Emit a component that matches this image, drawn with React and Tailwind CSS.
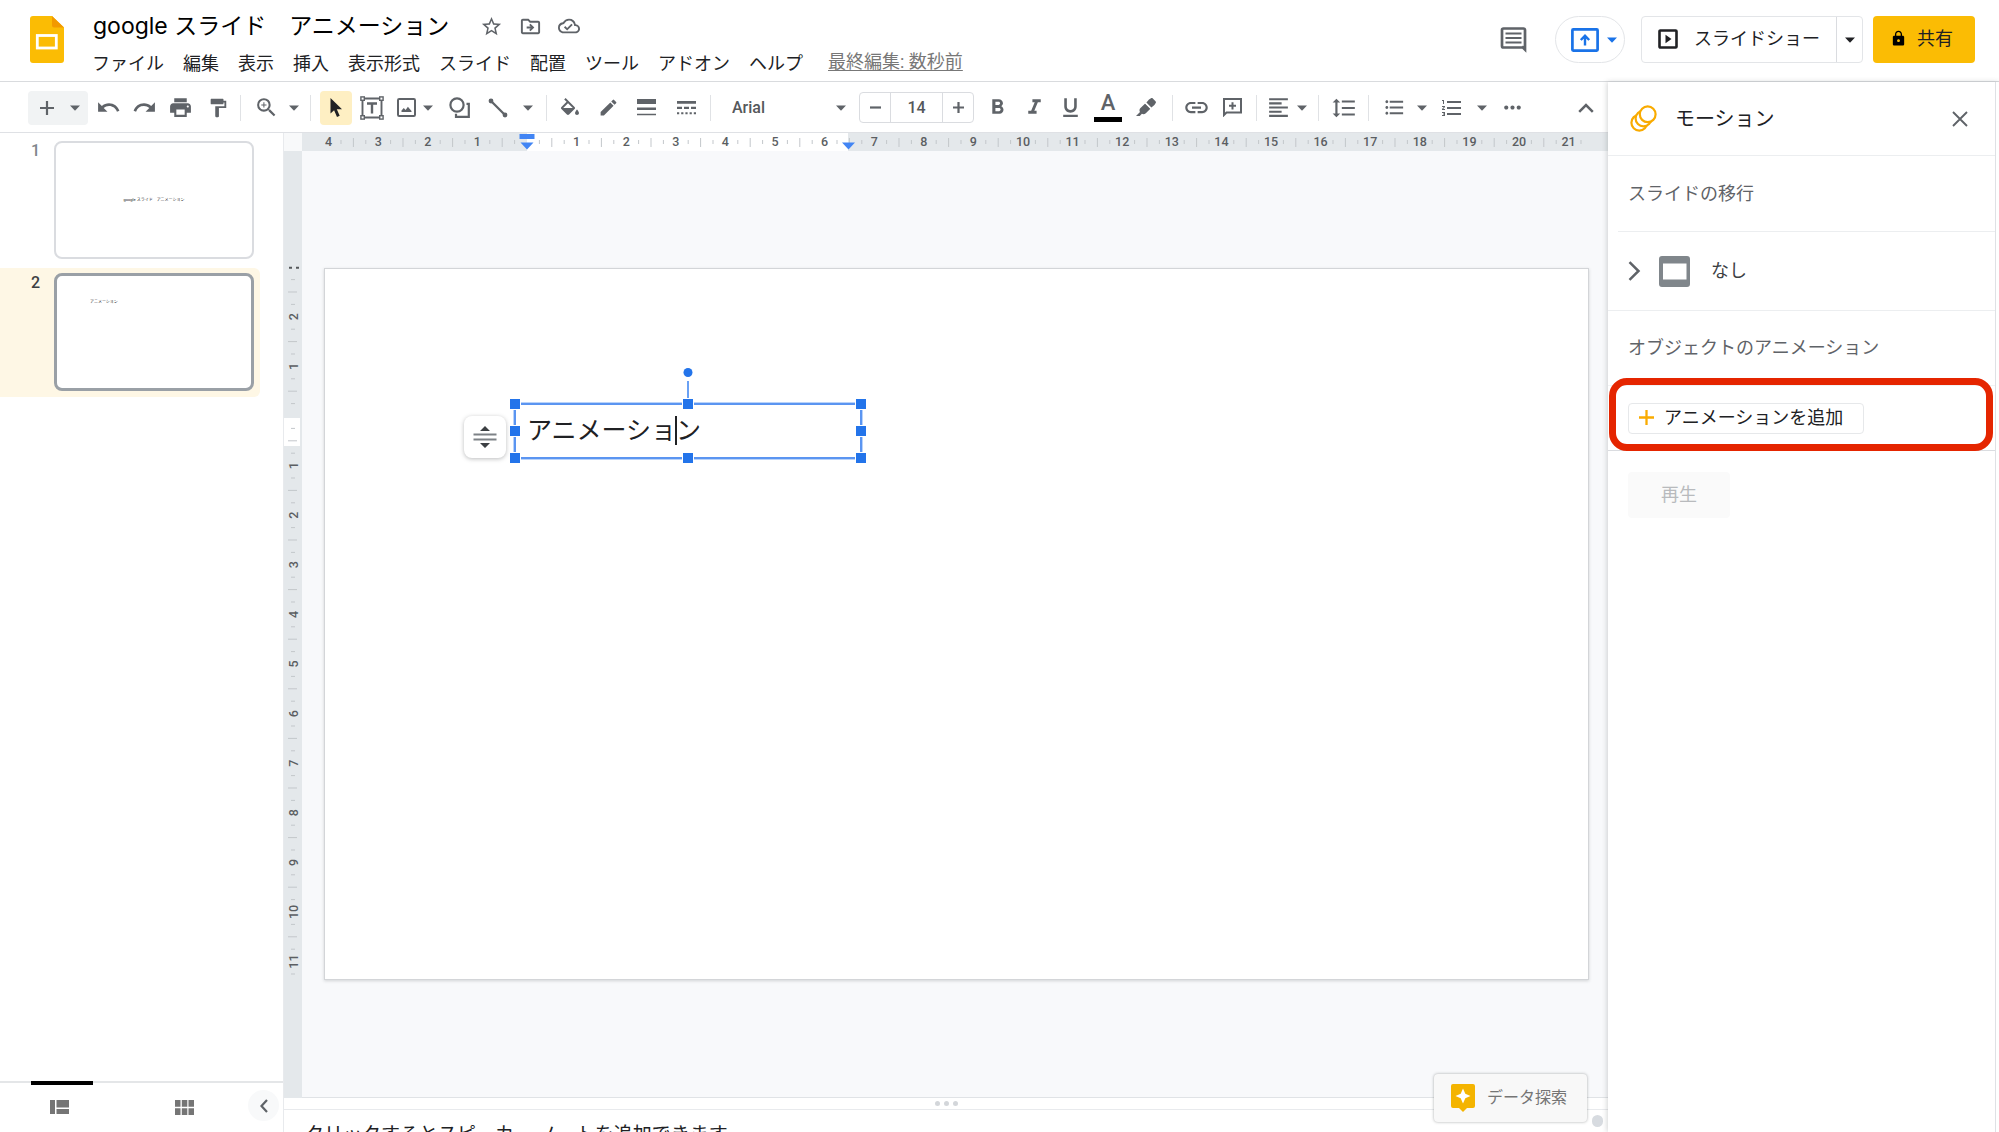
import React from 'react';
import {
  MdUndo,
  MdRedo,
  MdPrint,
  MdFormatPaint,
  MdZoomIn,
  MdEdit,
  MdFormatBold,
  MdFormatItalic,
  MdFormatUnderlined,
  MdLink,
  MdFormatAlignLeft,
  MdFormatLineSpacing,
  MdFormatListBulleted,
  MdFormatListNumbered,
  MdMoreHoriz,
  MdLock,
  MdStarBorder,
  MdOutlineDriveFileMove,
  MdOutlineCloudDone,
} from 'react-icons/md';

const MENUS = ['ファイル', '編集', '表示', '挿入', '表示形式', 'スライド', '配置', 'ツール', 'アドオン', 'ヘルプ'];

const UNIT = 49.6;

function Caret({ className = '' }) {
  return (
    <svg width="10" height="6" viewBox="0 0 10 6" className={`shrink-0 ${className}`} aria-hidden="true">
      <path d="M0 0.5h10L5 5.8z" fill="currentColor" />
    </svg>
  );
}

function Tool({ label, w, className = '', children }) {
  return (
    <button aria-label={label} className={`flex h-[34px] shrink-0 items-center justify-center ${w} ${className}`}>
      {children}
    </button>
  );
}

function Sep({ w }) {
  return (
    <div className={`flex shrink-0 justify-center ${w}`}>
      <div className="h-[26px] w-px bg-[#e0e2e5]" />
    </div>
  );
}

function Logo() {
  return (
    <svg width="34" height="47" viewBox="0 0 34 47" aria-hidden="true">
      <path d="M3 0h19l12 11.500v32.500a3 3 0 0 1-3 3H3a3 3 0 0 1-3-3V3a3 3 0 0 1 3-3z" fill="#fbbc04" />
      <path d="M22 0l12 11.500H24a2 2 0 0 1-2-2z" fill="#f29900" />
      <rect x="7.300" y="19.500" width="19" height="12.500" fill="none" stroke="#fff" strokeWidth="2.800" />
    </svg>
  );
}

function Header() {
  return (
    <header className="flex h-[82px] shrink-0 items-start border-b border-[#d9dbde] bg-white pr-6 pl-[30px]">
      <div className="mt-4 shrink-0">
        <Logo />
      </div>
      <div className="ml-7 min-w-0 flex-1">
        <div className="flex h-[50px] items-center pt-0.5">
          <input
            aria-label="ドキュメントの名前"
            defaultValue="google スライド　アニメーション"
            className="h-9 w-[388px] bg-transparent pl-px font-[Inter,'Noto_Sans_CJK_JP',sans-serif] text-[23px] leading-9 text-black outline-none"
          />
          <div className="flex items-center gap-4 text-[#5f6368]">
            <button aria-label="スター">
              <MdStarBorder size={23} />
            </button>
            <button aria-label="移動">
              <MdOutlineDriveFileMove size={23} />
            </button>
            <button aria-label="保存済み">
              <MdOutlineCloudDone size={22} />
            </button>
          </div>
        </div>
        <nav className="flex h-7 items-center gap-[19px] text-[18px] leading-7 whitespace-nowrap text-[#202124]">
          {MENUS.map((m) => (
            <button key={m}>{m}</button>
          ))}
          <a href="#history" className="ml-1.5 self-start leading-6 text-[#777] underline underline-offset-2">
            最終編集: 数秒前
          </a>
        </nav>
      </div>
      <div className="mt-4 flex h-[47px] shrink-0 items-center text-[18px]">
        <button aria-label="コメント履歴を開く" className="mr-7">
          <svg width="27" height="27" viewBox="0 0 27 27" fill="none" stroke="#5f6368" aria-hidden="true">
            <path d="M24.500 21.500H3.500a1.500 1.500 0 0 1-1.500-1.500V4a1.500 1.500 0 0 1 1.500-1.500h20a1.500 1.500 0 0 1 1.500 1.500v19.500l-3-3" strokeWidth="2.700" />
            <path d="M5.500 7.500h16M5.500 12h16M5.500 16.500h16" strokeWidth="2.200" />
          </svg>
        </button>
        <button aria-label="会議に表示" className="mr-4 flex h-[47px] w-[70px] items-center gap-2 rounded-full border border-[#e3e5e8] pl-[15px] text-[#1a73e8]">
          <svg width="28" height="24" viewBox="0 0 28 24" fill="none" stroke="currentColor" strokeWidth="2.700" aria-hidden="true">
            <rect x="1.400" y="1.400" width="25.200" height="21.200" rx="0.800" />
            <path d="M14 17.500V8M9.800 12l4.200-4.200 4.200 4.200" strokeWidth="2.400" />
          </svg>
          <Caret />
        </button>
        <div className="mr-2.5 flex h-[47px] rounded border border-[#e3e5e8] text-[#202124]">
          <button className="flex w-[194px] items-center pb-0.5 pl-4">
            <svg width="20" height="20" viewBox="0 0 20 20" fill="none" stroke="currentColor" strokeWidth="2.600" aria-hidden="true">
              <rect x="1.500" y="1.500" width="17" height="17" rx="0.800" />
              <path d="M7.500 5.800v8.400l6-4.200z" fill="currentColor" stroke="none" />
            </svg>
            <span className="ml-4">スライドショー</span>
          </button>
          <button aria-label="プレゼンテーションのオプション" className="flex w-[26px] items-center justify-center border-l border-[#dadce0]">
            <Caret />
          </button>
        </div>
        <button className="flex h-[47px] w-[102px] items-center rounded bg-[#fbbc04] pb-0.5 pl-[17px] text-[#202124]">
          <MdLock size={17} className="text-black" />
          <span className="ml-2.5">共有</span>
        </button>
      </div>
    </header>
  );
}

function Toolbar() {
  return (
    <div className="flex h-[51px] shrink-0 items-center border-b border-[#dfe1e5] bg-white pt-px pl-7 text-[#5f6368]">
      <button aria-label="新しいスライド" className="flex h-[34px] w-15 shrink-0 items-center rounded-sm bg-[#f1f3f4] pl-3">
        <svg width="14" height="14" viewBox="0 0 14 14" stroke="currentColor" strokeWidth="2.200" aria-hidden="true">
          <path d="M7 0v14M0 7h14" />
        </svg>
        <Caret className="ml-4" />
      </button>
      <Tool label="元に戻す" w="w-10"><MdUndo size={25} /></Tool>
      <Tool label="やり直す" w="w-8"><MdRedo size={25} /></Tool>
      <Tool label="印刷" w="w-10"><MdPrint size={25} /></Tool>
      <Tool label="書式の貼り付け" w="w-9"><MdFormatPaint size={22} /></Tool>
      <Sep w="w-2" />
      <Tool label="ズーム" w="w-11"><MdZoomIn size={25} /></Tool>
      <Tool label="ズームのオプション" w="w-3"><Caret /></Tool>
      <Sep w="w-5" />
      <Tool label="選択" w="w-8" className="rounded-sm bg-[#feefc3]">
        <svg width="14" height="20" viewBox="0 0 14 20" fill="#202124" aria-hidden="true">
          <path d="M1.500 0v15.500l3.600-3.200 2.900 6.700 2.700-1.200-2.900-6.500h5.200z" />
        </svg>
      </Tool>
      <Tool label="テキスト ボックス" w="w-10">
        <svg width="24" height="24" viewBox="0 0 24 24" fill="none" stroke="currentColor" className="shrink-0" aria-hidden="true">
          <path d="M4 2.500h16M4 21.500h16M2.500 4v16M21.500 4v16" strokeWidth="1.900" />
          <path d="M7 7.500h10M12 7.500v10" strokeWidth="2.400" />
          <g fill="#fff" strokeWidth="1.400">
            <rect x="0.900" y="0.900" width="3.400" height="3.400" />
            <rect x="19.700" y="0.900" width="3.400" height="3.400" />
            <rect x="0.900" y="19.700" width="3.400" height="3.400" />
            <rect x="19.700" y="19.700" width="3.400" height="3.400" />
          </g>
        </svg>
      </Tool>
      <Tool label="画像を挿入" w="w-7">
        <svg width="19" height="19" viewBox="0 0 19 19" aria-hidden="true">
          <rect x="1" y="1" width="17" height="17" rx="1.200" fill="none" stroke="currentColor" strokeWidth="2" />
          <path d="M4.500 14v-1.500l2.300-2.500 1.800 2 2.300-3.200 3.600 4.200V14z" fill="currentColor" />
        </svg>
      </Tool>
      <Tool label="画像のオプション" w="w-4"><Caret /></Tool>
      <Tool label="図形" w="w-12">
        <svg width="22" height="22" viewBox="0 0 22 22" fill="none" stroke="currentColor" strokeWidth="2.200" aria-hidden="true">
          <circle cx="8" cy="8" r="6.600" />
          <path d="M17.500 6.800h2.300v13H7v-3" />
        </svg>
      </Tool>
      <Tool label="線" w="w-7">
        <svg width="20" height="20" viewBox="0 0 20 20" stroke="currentColor" aria-hidden="true">
          <path d="M3 3l14 14" strokeWidth="2.300" />
          <circle cx="3" cy="3" r="2.400" fill="currentColor" stroke="none" />
          <circle cx="17" cy="17" r="2.400" fill="currentColor" stroke="none" />
        </svg>
      </Tool>
      <Tool label="線のオプション" w="w-8"><Caret /></Tool>
      <Sep w="w-1" />
      <Tool label="塗りつぶしの色" w="w-11">
        <svg width="22" height="22" viewBox="1 -1 22 22" fill="currentColor" aria-hidden="true">
          <path d="M16.560 8.940L7.620 0 6.210 1.410l2.380 2.380-5.150 5.150c-.59.59-.59 1.540 0 2.120l5.500 5.500c.29.29.68.44 1.060.44s.77-.15 1.060-.44l5.500-5.500c.59-.58.59-1.530 0-2.120zM5.210 10L10 5.210 14.790 10H5.210zM19 11.500s-2 2.170-2 3.500c0 1.100.9 2 2 2s2-.9 2-2c0-1.330-2-3.500-2-3.500z" />
        </svg>
      </Tool>
      <Tool label="枠線の色" w="w-8"><MdEdit size={21} /></Tool>
      <Tool label="枠線の太さ" w="w-11">
        <svg width="19" height="17" viewBox="0 0 19 17" fill="currentColor" aria-hidden="true">
          <path d="M0 0h19v5H0zM0 8.500h19v2.500H0zM0 14.800h19v1.500H0z" />
        </svg>
      </Tool>
      <Tool label="枠線の破線" w="w-9">
        <svg width="19" height="14" viewBox="0 0 19 14" fill="currentColor" aria-hidden="true">
          <path d="M0 0h19v2.800H0zM0 5.700h5v2.400H0zM7 5.700h5v2.400H7zM14 5.700h5v2.400h-5zM0 11.200h2.200v2H0zM4.200 11.200h2.200v2H4.200zM8.400 11.200h2.200v2H8.400zM12.600 11.200h2.200v2h-2.200zM16.800 11.200H19v2h-2.200z" />
        </svg>
      </Tool>
      <Sep w="w-3" />
      <label className="flex h-[34px] w-[143px] shrink-0 items-center pr-[13px] pl-4">
        <select aria-label="フォント" className="h-full flex-1 appearance-none bg-transparent text-[16px] font-medium text-[#55585b] outline-none">
          <option>Arial</option>
        </select>
        <Caret />
      </label>
      <div className="flex h-[31px] w-[115px] shrink-0 items-stretch rounded-sm border border-[#dadce0]">
        <button aria-label="フォントサイズを縮小" className="flex w-[30px] items-center justify-center">
          <svg width="11" height="11" viewBox="0 0 11 11" aria-hidden="true"><path d="M0 5.500h11" stroke="currentColor" strokeWidth="2.200" /></svg>
        </button>
        <input aria-label="フォントサイズ" defaultValue="14" className="w-0 min-w-0 flex-1 border-x border-[#dadce0] text-center text-[16px] font-medium text-[#55585b] outline-none" />
        <button aria-label="フォントサイズを拡大" className="flex w-[30px] items-center justify-center">
          <svg width="11" height="11" viewBox="0 0 11 11" aria-hidden="true"><path d="M0 5.500h11M5.500 0v11" stroke="currentColor" strokeWidth="2.200" /></svg>
        </button>
      </div>
      <Tool label="太字" w="w-[46px]"><MdFormatBold size={25} /></Tool>
      <Tool label="斜体" w="w-7"><MdFormatItalic size={25} /></Tool>
      <Tool label="下線" w="w-11"><MdFormatUnderlined size={25} /></Tool>
      <Tool label="テキストの色" w="w-8" className="flex-col">
        <span className="text-[22px] leading-5 font-medium">A</span>
        <span className="mt-1 h-[5px] w-7 bg-black" />
      </Tool>
      <Tool label="ハイライトの色" w="w-11">
        <svg width="20" height="20" viewBox="0 0 20 20" fill="currentColor" aria-hidden="true">
          <path d="M13 1.600l2-1.300c.6-.4 1.300-.3 1.800.2l2.700 2.700c.5.500.6 1.200.2 1.800l-1.300 2-3 2.500-5-5zM9.200 5.600l5.200 5.200-4.600 4.400c-1.300 1.100-2.600 1.200-3.900.6L3.800 18H0l4-4c-.8-1.400-.7-2.800.5-4z" />
          <path d="M8.800 4.900l6.300 6.300" stroke="#fff" strokeWidth="1" />
        </svg>
      </Tool>
      <Sep w="w-2" />
      <Tool label="リンクを挿入" w="w-10"><MdLink size={27} /></Tool>
      <Tool label="コメントを追加" w="w-8">
        <svg width="19" height="19" viewBox="0 0 19 19" fill="none" stroke="currentColor" strokeWidth="2" aria-hidden="true">
          <path d="M1 17V1h17v13.500H3.500z" />
          <path d="M9.500 4.200v7.200M6 7.800h7" />
        </svg>
      </Tool>
      <Sep w="w-4" />
      <Tool label="配置" w="w-7"><MdFormatAlignLeft size={25} /></Tool>
      <Tool label="配置のオプション" w="w-5"><Caret /></Tool>
      <Sep w="w-3" />
      <Tool label="行間隔と段落の間隔" w="w-10"><MdFormatLineSpacing size={26} /></Tool>
      <Sep w="w-2" />
      <Tool label="箇条書き" w="w-11"><MdFormatListBulleted size={23} /></Tool>
      <Tool label="箇条書きのオプション" w="w-3"><Caret /></Tool>
      <Tool label="番号付きリスト" w="w-12"><MdFormatListNumbered size={24} /></Tool>
      <Tool label="番号付きリストのオプション" w="w-3"><Caret /></Tool>
      <Tool label="もっと見る" w="w-12"><MdMoreHoriz size={25} /></Tool>
      <Tool label="メニューを非表示" w="w-11" className="ml-auto">
        <svg width="16" height="10" viewBox="0 0 16 10" fill="none" stroke="currentColor" strokeWidth="2.500" aria-hidden="true">
          <path d="M1.200 8.800L8 2l6.800 6.800" />
        </svg>
      </Tool>
    </div>
  );
}

function Thumb({ n, selected, children }) {
  return (
    <li className={`mr-[23px] flex h-[129px] rounded-r-md ${selected ? 'bg-[#fef7e5]' : ''}`}>
      <span className={`w-[54px] pt-[5px] pr-3.5 text-right text-[16px] leading-5 font-medium ${selected ? 'text-[#3c4043]' : 'text-[#80868b]'}`}>
        {n}
      </span>
      <button
        aria-label={`スライド ${n}`}
        className={`mt-[5px] flex h-[118px] w-[200px] flex-col rounded-lg bg-white text-[#202124] ${selected ? 'border-[3px] border-[#9aa0a6]' : 'border-2 border-[#dadce0]'}`}
      >
        {children}
      </button>
    </li>
  );
}

function Filmstrip() {
  return (
    <aside className="flex w-[283px] shrink-0 flex-col bg-white">
      <ol className="flex flex-1 flex-col gap-[3px] pt-[3px]">
        <Thumb n={1}>
          <span className="m-auto text-[4px] leading-none whitespace-pre">google スライド　アニメーション</span>
        </Thumb>
        <Thumb n={2} selected>
          <span className="mt-6 ml-[33px] self-start text-[4px] leading-none">アニメーション</span>
        </Thumb>
      </ol>
      <div className="flex h-[51px] items-start border-t-2 border-[#e4e6e8] text-[#757575]">
        <button aria-label="フィルムストリップ表示" className="-mt-0.5 ml-[31px] flex h-[48px] w-[62px] items-center justify-center border-t-4 border-black pr-1.5">
          <svg width="19" height="14" viewBox="0 0 19 14" fill="currentColor" aria-hidden="true">
            <path d="M0 0h5v14H0zM6.500 0H19v7.500H6.500zM6.500 9H19v5H6.500z" />
          </svg>
        </button>
        <button aria-label="グリッド表示" className="ml-[60px] flex h-[48px] w-[62px] items-center justify-center">
          <svg width="19" height="15" viewBox="0 0 19 15" fill="currentColor" aria-hidden="true">
            <path d="M0 0h5.500v6.800H0zM6.800 0h5.500v6.800H6.800zM13.500 0H19v6.800h-5.500zM0 8.200h5.500V15H0zM6.800 8.200h5.500V15H6.800zM13.500 8.200H19V15h-5.500z" />
          </svg>
        </button>
        <button aria-label="フィルムストリップを閉じる" className="mt-[7px] mr-1 ml-auto flex h-[31px] w-[31px] items-center justify-center rounded-full bg-[#f8f9fa] text-[#5f6368]">
          <svg width="8" height="14" viewBox="0 0 8 14" fill="none" stroke="currentColor" strokeWidth="2.200" aria-hidden="true">
            <path d="M7 1L1.500 7 7 13" />
          </svg>
        </button>
      </div>
    </aside>
  );
}

const H_NUMS = Array.from({ length: 26 }, (_, i) => i - 4);
const V_NUMS = Array.from({ length: 14 }, (_, i) => i - 2);

function HRuler() {
  const zero = 225;
  return (
    <svg height="19" className="block w-full min-w-0 bg-[#e4e8eb]" aria-hidden="true">
      <rect x={zero} y="0" width="321" height="19" fill="#fff" />
      {H_NUMS.map((n) => {
        const x = zero + n * UNIT;
        return (
          <g key={n}>
            {n !== 0 && (
              <text x={x} y="13" textAnchor="middle" fontSize="12.500" fontWeight="500" fill="#5b5e62">
                {Math.abs(n)}
              </text>
            )}
            <path d={`M${x + UNIT / 4} 7v4${n < 21 ? `M${x + UNIT / 2} 5v9M${x + (3 * UNIT) / 4} 7v4` : ''}`} stroke="#c3c7cb" />
          </g>
        );
      })}
      <path d={`M${zero - 7.500} 1h15v5h-15zM${zero - 6.500} 9.500h13l-6.500 7zM${zero + 315} 9.500h13l-6.500 7z`} fill="#4285f4" />
    </svg>
  );
}

function VRuler() {
  const zero = 265;
  return (
    <svg width="19" className="block h-full border-l border-[#e8eaed] bg-[#e4e8eb]" aria-hidden="true">
      <rect x="0" y={zero + 2} width="16" height="28" fill="#fff" />
      <path d={`M5 ${zero - 3 * UNIT + 0.500}h3M12 ${zero - 3 * UNIT + 0.500}h3`} stroke="#55585b" strokeWidth="2" />
      <path d={`M7 ${zero - 2.750 * UNIT}h4M4 ${zero - 2.500 * UNIT}h9M7 ${zero - 2.250 * UNIT}h4`} stroke="#c3c7cb" />
      {V_NUMS.map((n) => {
        const y = zero + n * UNIT;
        return (
          <g key={n}>
            {n !== 0 && (
              <text x="0" y="0" transform={`translate(14 ${y}) rotate(-90)`} textAnchor="middle" fontSize="12.500" fontWeight="500" fill="#5b5e62">
                {Math.abs(n)}
              </text>
            )}
            <path d={`M7 ${y + UNIT / 4}h4${n < 11 ? `M4 ${y + UNIT / 2}h9M7 ${y + (3 * UNIT) / 4}h4` : ''}`} stroke="#c3c7cb" />
          </g>
        );
      })}
    </svg>
  );
}

function Handle({ className }) {
  return <span className={`absolute h-[10px] w-[10px] -translate-x-1/2 -translate-y-1/2 bg-[#2374ea] ring-1 ring-white ${className}`} />;
}

function TextBox() {
  return (
    <div className="absolute top-[134px] left-[189px] h-[56px] w-[348px] border-2 border-[#5b95f1] bg-white ring-1 ring-[#b9d3fa]">
      <p className="pl-[11px] text-[25px] leading-[51px] whitespace-nowrap text-[#202124]">アニメーション</p>
      <span className="absolute top-[11px] left-[159px] h-[29px] w-0.5 bg-[#202124]" />
      <span className="absolute -top-[24px] left-1/2 h-[22px] w-0.5 -translate-x-1/2 bg-[#6aa1f4]" />
      <span className="absolute -top-[37px] left-1/2 h-[9px] w-[9px] -translate-x-1/2 rounded-full bg-[#2374ea]" />
      <Handle className="-top-px -left-px" />
      <Handle className="-top-px left-1/2" />
      <Handle className="-top-px left-[345px]" />
      <Handle className="top-1/2 -left-px" />
      <Handle className="top-1/2 left-[345px]" />
      <Handle className="top-[53px] -left-px" />
      <Handle className="top-[53px] left-1/2" />
      <Handle className="top-[53px] left-[345px]" />
      <button aria-label="自動調整のオプション" className="absolute top-[11px] -left-[52px] flex h-[42px] w-[42px] items-center justify-center rounded-lg bg-white shadow-[0_1px_4px_rgba(60,64,67,0.35)]">
        <svg width="24" height="24" viewBox="0 0 24 24" aria-hidden="true">
          <path d="M7 6l5-5 5 5zM7 18h10l-5 5z" fill="#3c4043" />
          <path d="M0.500 9.500h23M0.500 14.500h23" stroke="#7d8186" strokeWidth="2.200" />
        </svg>
      </button>
    </div>
  );
}

function Workspace() {
  return (
    <main className="relative flex min-w-0 flex-1 flex-col">
      <div className="grid min-h-0 flex-1 grid-cols-[19px_minmax(0,1fr)] grid-rows-[18px_minmax(0,1fr)]">
        <div className="border-l border-[#e8eaed] bg-[#f8f9fa]" />
        <HRuler />
        <VRuler />
        <div className="flex items-center border-b border-[#e0e3e6] bg-[#f8f9fb] pr-[19px] pl-[22px]">
          <section aria-label="スライド" className="relative aspect-video w-full border border-[#d3d5d8] bg-white shadow-[0_1px_3px_rgba(60,64,67,0.2)]">
            <TextBox />
          </section>
        </div>
      </div>
      <div className="flex h-3 shrink-0 items-center justify-center gap-1 border-b border-[#e8eaed] border-l bg-white">
        <span className="h-[5px] w-[5px] rounded-full bg-[#d3d6da]" />
        <span className="h-[5px] w-[5px] rounded-full bg-[#d3d6da]" />
        <span className="h-[5px] w-[5px] rounded-full bg-[#d3d6da]" />
      </div>
      <textarea
        aria-label="スピーカー ノート"
        defaultValue="クリックするとスピーカー ノートを追加できます"
        className="h-[22px] shrink-0 resize-none overflow-hidden border-l border-[#e8eaed] bg-white pt-[11px] pl-[21px] text-[19px] leading-7 text-[#202124] outline-none"
      />
      <button className="absolute right-[21px] bottom-[10px] flex h-[48px] w-[153px] items-center rounded-sm bg-[#f8f8f8] pl-[17px] text-[16px] text-[#757575] shadow-[0_0_3px_rgba(60,64,67,0.45)]">
        <svg width="24" height="28" viewBox="0 0 24 28" className="shrink-0" aria-hidden="true">
          <path d="M2 0h20a2 2 0 0 1 2 2v20a2 2 0 0 1-2 2h-6l-4 4-4-4H2a2 2 0 0 1-2-2V2a2 2 0 0 1 2-2z" fill="#f4b400" />
          <path d="M12 4.500l2.300 5.200L19.500 12l-5.200 2.300L12 19.500l-2.300-5.200L4.500 12l5.200-2.300z" fill="#fff" />
        </svg>
        <span className="ml-3">データ探索</span>
      </button>
      <span className="absolute right-[5px] bottom-[5px] h-3 w-[11px] rounded-full bg-[#d7dbe0]" />
    </main>
  );
}

function MotionPanel() {
  return (
    <aside className="relative flex w-[391px] shrink-0 bg-white pr-[3px] text-[18px] text-[#3c4043] shadow-[-1px_0_5px_rgba(60,64,67,0.22)]">
      <div className="flex-1 border-r border-[#dfe1e5]">
        <div className="flex h-[74px] items-center border-b border-[#eceef0] pr-[27px] pl-[22px]">
          <svg width="27" height="27" viewBox="0 0 27 27" fill="#fff" stroke="#f9ab00" strokeWidth="2.200" aria-hidden="true">
            <circle cx="9.300" cy="17.700" r="7.900" />
            <circle cx="13.500" cy="13.500" r="7.900" />
            <circle cx="17.700" cy="9.300" r="7.900" />
          </svg>
          <h2 className="ml-[18px] flex-1 text-[20px] text-[#202124]">モーション</h2>
          <button aria-label="閉じる">
            <svg width="16" height="16" viewBox="0 0 16 16" stroke="#5f6368" strokeWidth="1.900" aria-hidden="true">
              <path d="M1 1l14 14M15 1L1 15" />
            </svg>
          </button>
        </div>
        <h3 className="ml-2.5 flex h-[76px] items-center border-b border-[#eceef0] pb-px pl-2.5 text-[#5f6368]">スライドの移行</h3>
        <button className="flex h-[79px] w-full items-center border-b border-[#eceef0] pl-5">
          <svg width="13" height="20" viewBox="0 0 13 20" fill="none" stroke="#5f6368" strokeWidth="2.500" aria-hidden="true">
            <path d="M1.500 1.200L10.500 10l-9 8.800" />
          </svg>
          <svg width="31" height="31" viewBox="0 0 31 31" className="ml-[18px]" aria-hidden="true">
            <path fillRule="evenodd" d="M3 0h25a3 3 0 0 1 3 3v25a3 3 0 0 1-3 3H3a3 3 0 0 1-3-3V3a3 3 0 0 1 3-3zM4 7.500v16h23.500v-16z" fill="#80868b" />
          </svg>
          <span className="ml-[21px] pb-0.5">なし</span>
        </button>
        <h3 className="flex h-[75px] items-center border-b border-[#f1f3f4] pb-px pl-5 text-[#5f6368]">オブジェクトのアニメーション</h3>
        <div className="relative flex h-[65px] items-center border-b border-[#dadce0] pl-5">
          <button className="flex h-[31px] w-[236px] items-center rounded border border-[#e6e8ea] pb-px pl-2.5 whitespace-nowrap text-[#202124]">
            <svg width="15" height="15" viewBox="0 0 15 15" stroke="#f9ab00" strokeWidth="2.300" aria-hidden="true">
              <path d="M7.500 0v15M0 7.500h15" />
            </svg>
            <span className="ml-2.5">アニメーションを追加</span>
          </button>
          <div className="pointer-events-none absolute -top-2 right-0.5 -bottom-px left-px rounded-[18px] border-[7px] border-[#e52500]" />
        </div>
        <button disabled className="mt-[21px] ml-5 h-[46px] w-[102px] rounded bg-[#fafafa] pb-0.5 text-[#b8babd]">再生</button>
      </div>
    </aside>
  );
}

export default function App() {
  return (
    <div className="flex h-screen flex-col overflow-hidden bg-white font-[Roboto,'Noto_Sans_CJK_JP',sans-serif]">
      <Header />
      <div className="flex min-h-0 flex-1">
        <div className="flex min-w-0 flex-1 flex-col">
          <Toolbar />
          <div className="flex min-h-0 flex-1">
            <Filmstrip />
            <Workspace />
          </div>
        </div>
        <MotionPanel />
      </div>
    </div>
  );
}
